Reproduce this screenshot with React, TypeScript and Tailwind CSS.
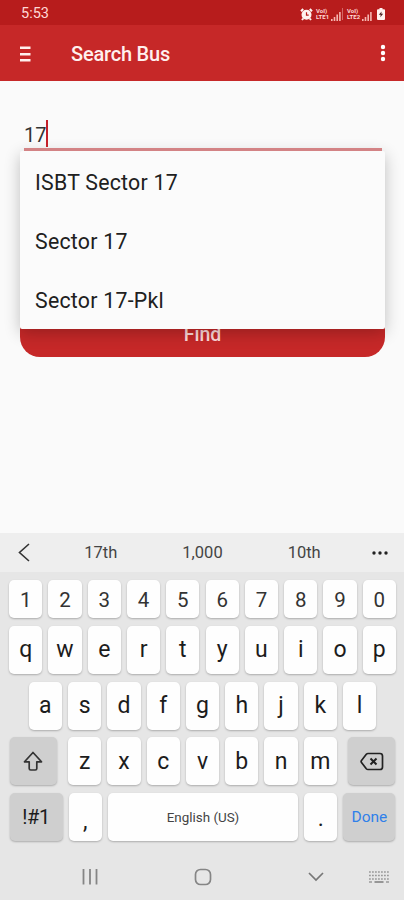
import clsx from "clsx";

const suggestions = ["ISBT Sector 17", "Sector 17", "Sector 17-Pkl"];

const numberRow = "1234567890".split("");
const topRow = "qwertyuiop".split("");
const homeRow = "asdfghjkl".split("");
const bottomRow = "zxcvbnm".split("");

const StatusBar = () => (
  <div className="flex h-[25px] items-center bg-[#b71c1c] pl-[21px] pr-[19px] pt-[3px] text-[#ffd9d6]">
    <span className="text-[14.5px] leading-none">5:53</span>
    <div className="ml-auto flex items-center">
      {/* Alarm */}
      <svg width="13" height="13" viewBox="0 0 13 13" fill="none">
        <circle cx="6.5" cy="6.8" r="5" fill="#fff3f0" />
        <path d="M1 3.2 3.2 1M12 3.2 9.8 1M3.2 10.5 2 12M9.8 10.5 11 12" stroke="#fff3f0" strokeWidth="2" />
        <path d="M6.5 4.3v2.8h2.2" stroke="#b71c1c" strokeWidth="1.2" />
      </svg>
      <Sim label="LTE1" />
      <span className="mx-px h-3 w-px bg-[#e79a96]/60" />
      <Sim label="LTE2" />
      {/* Battery */}
      <svg className="ml-[5px]" width="8" height="12" viewBox="0 0 8 12">
        <path d="M2.5 0h3v1.3H7a1 1 0 0 1 1 1V11a1 1 0 0 1-1 1H1a1 1 0 0 1-1-1V2.3a1 1 0 0 1 1-1h1.5z" fill="#fff3f0" />
        <path d="M4.6 3.5 1.8 6.8h1.9L3.3 9.3l2.9-3.5H4.3z" fill="#4a2020" />
      </svg>
    </div>
  </div>
);

const Sim = ({ label }: { label: string }) => (
  <div className="ml-[3px] flex items-end">
    <div className="flex w-[15px] flex-col text-[6px] font-bold leading-[6.5px]">
      <span>VoI)</span>
      <span>{label}</span>
    </div>
    <svg width="10" height="10" viewBox="0 0 10 10" fill="#f5b5b0">
      <path d="M0 8h1.6v2H0zM2.7 6h1.6v4H2.7zM5.4 3.5H7V10H5.400zM8.1 1h1.600v9H8.1z" />
    </svg>
  </div>
);

const AppBar = () => (
  <header className="flex h-14 items-center bg-[#c62828] pl-5 pr-[18px] text-[#fff0ee]">
    <svg width="11" height="17" viewBox="0 0 11 17" fill="currentColor">
      <path d="M0 1.5h10.5V4H0zM0 8h10.5v2.5H0zM0 14h10.5v2.5H0z" />
    </svg>
    <h1 className="ml-10 pt-[2px] text-[20px] font-medium leading-none tracking-[-0.2px]">Search Bus</h1>
    <svg className="ml-auto" width="6" height="18" viewBox="0 0 6 18" fill="#fff">
      <circle cx="3" cy="3" r="2.2" />
      <circle cx="3" cy="9" r="2.2" />
      <circle cx="3" cy="15" r="2.2" />
    </svg>
  </header>
);

const SearchForm = () => (
  <main className="relative h-[452px] bg-[#fafafa] pl-5 pr-[19px] pt-[39px]">
    <div className="relative z-10 ml-1 mr-[3px] flex h-[31px] items-start border-b-[3px] border-[#d38385]">
      <span className="pt-[4px] text-[20px] leading-[22px] text-[#333]">17</span>
      <span className="h-[27px] w-[2px] bg-[#c4202a]" />
    </div>
    <button className="mt-[158px] flex h-[48px] w-full items-center justify-center rounded-[20px] bg-[#c62828] pt-[4px] text-[19.5px] font-medium leading-none text-[#ffd9d9]">
      Find
    </button>

    {/* Autocomplete dropdown */}
    <ul className="absolute left-5 top-[70px] h-[178px] w-[365px] rounded-[2px] bg-[#fbfbfb] pt-px shadow-[0_4px_16px_rgba(0,0,0,0.24)]">
      {suggestions.map((name) => (
        <li key={name} className="flex h-[59px] items-center pl-[15px] pt-[3px] text-[21.3px] tracking-[0.25px] text-[#202020]">
          {name}
        </li>
      ))}
    </ul>
  </main>
);

type KeyProps = {
  children?: React.ReactNode;
  className?: string;
  dark?: boolean;
};

const Key = ({ children, className, dark }: KeyProps) => (
  <div
    className={clsx(
      "flex shrink-0 items-center justify-center rounded-[5px] text-[#1c1c1c] shadow-[0_1px_2px_rgba(0,0,0,0.25)]",
      dark ? "bg-[#cfcfcf]" : "bg-[#fefefe]",
      className
    )}
  >
    {children}
  </div>
);

const LetterKeys = ({ letters }: { letters: string[] }) => (
  <>
    {letters.map((l) => (
      <Key key={l} className="h-12 w-[33.2px] pt-[1px] text-[23px]">
        {l}
      </Key>
    ))}
  </>
);

const Keyboard = () => (
  <section className="flex h-[328px] flex-col gap-[7.7px] bg-[#e6e6e6] pl-px pt-[8.3px]">
    <div className="flex justify-center gap-[6.1px]">
      {numberRow.map((n) => (
        <Key key={n} className="h-[38px] w-[33.2px] pt-[2px] text-[20.5px] text-[#333]">
          {n}
        </Key>
      ))}
    </div>
    <div className="flex justify-center gap-[6.1px]">
      <LetterKeys letters={topRow} />
    </div>
    <div className="flex justify-center gap-[6.1px]">
      <LetterKeys letters={homeRow} />
    </div>
    <div className="flex justify-center gap-[6.1px]">
      <Key dark className="mr-[5px] h-12 w-[47px]">
        <svg width="20" height="21" viewBox="0 0 20 21" fill="none" stroke="#333" strokeWidth="1.7" strokeLinejoin="round">
          <path d="M10 1.5 1.5 10.8h4.7v6.7q0 1.5 1.5 1.5h4.6q1.5 0 1.5-1.5v-6.7h4.7z" />
        </svg>
      </Key>
      <LetterKeys letters={bottomRow} />
      <Key dark className="ml-[5px] h-12 w-[47px]">
        <svg width="24" height="19" viewBox="0 0 24 19" fill="none" stroke="#222" strokeWidth="1.7" strokeLinejoin="round">
          <path d="M8 1.5h12q2.5 0 2.5 2.5v11q0 2.5-2.5 2.5H8q-1 0-1.700-.8L1.5 10.5q-.8-1 0-2L6.3 2.3Q7 1.5 8 1.5z" />
          <path d="m10.5 6.5 6 6m0-6-6 6" strokeWidth="2" />
        </svg>
      </Key>
    </div>
    <div className="flex justify-center gap-[6.1px]">
      <Key dark className="h-12 w-[53px] text-[20px] tracking-[-0.3px]">!#1</Key>
      <Key className="h-12 w-[33.2px] pt-[11px] text-[23px]">,</Key>
      <Key className="h-12 w-[190px] pt-[2px] text-[13.4px] text-[#444]">English (US)</Key>
      <Key className="h-12 w-[33.2px] pt-[5px] text-[23px]">.</Key>
      <Key dark className="h-12 w-[52px] pt-[2px] text-[15.5px] text-[#2f80ea]">Done</Key>
    </div>
    <NavBar />
  </section>
);

const PredictionBar = () => (
  <div className="flex h-[39px] items-center bg-[#eeeeee] pl-[18px] pr-[15px] text-[16.5px] text-[#444]">
    <svg width="12" height="19" viewBox="0 0 12 19" fill="none" stroke="#333" strokeWidth="1.6">
      <path d="M11 1 1.5 9.5 11 18" />
    </svg>
    <div className="ml-[20px] mr-[16px] grid flex-1 grid-cols-3 pt-[2px] text-center">
      <span>17th</span>
      <span>1,000</span>
      <span>10th</span>
    </div>
    <svg width="18" height="4" viewBox="0 0 18 4" fill="#222">
      <circle cx="3" cy="2" r="1.7" />
      <circle cx="9" cy="2" r="1.7" />
      <circle cx="15" cy="2" r="1.7" />
    </svg>
  </div>
);

const NavBar = () => (
  <nav className="flex flex-1 items-center pl-[81px] pr-[15px] pt-[6px]">
    <svg width="16" height="16" viewBox="0 0 16 16" stroke="#858585" strokeWidth="1.8">
      <path d="M1.5 0v15.5M8 0v15.5M14.5 0v15.5" />
    </svg>
    <svg className="ml-[96px]" width="18" height="18" viewBox="0 0 18 18" fill="none" stroke="#858585" strokeWidth="1.7">
      <rect x="1.5" y="1.5" width="15" height="15" rx="5" />
    </svg>
    <svg className="ml-[96px]" width="16" height="10" viewBox="0 0 16 10" fill="none" stroke="#777" strokeWidth="1.7">
      <path d="m1 1 7 7 7-7" />
    </svg>
    <svg className="ml-auto" width="20" height="12" viewBox="0 0 20 12" stroke="#9a9a9a">
      <path d="M0 1h20M0 4.5h20M0 8h20" strokeWidth="1.7" strokeDasharray="1.8 1.2" />
      <path d="M0 11h3M17 11h3" strokeWidth="1.5" />
      <path d="M5.5 11h9" stroke="#888" strokeWidth="1.7" />
    </svg>
  </nav>
);

const App = () => {
  return (
    <div className="flex h-[900px] w-[404px] flex-col overflow-hidden font-[Roboto,sans-serif]">
      <StatusBar />
      <AppBar />
      <SearchForm />
      <PredictionBar />
      <Keyboard />
    </div>
  );
};

export default App;
